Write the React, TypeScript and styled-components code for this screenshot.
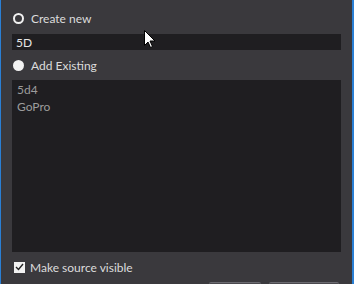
import React from "react";
import styled, { createGlobalStyle } from "styled-components";

const GlobalStyle = createGlobalStyle`
	html, body {
		margin: 0;
		padding: 0;
		background: #3a393d;
	}
	body {
		font-family: "Lato", "Open Sans", sans-serif;
		font-size: 12px;
	}
`;

const Dialog = styled.div`
	position: relative;
	width: 354px;
	height: 284px;
	box-sizing: border-box;
	background: #3a393d;
	border-left: 1px solid #2a7fd4;
	border-right: 2px solid #2a7fd4;
	padding: 8px 11px 0 11px;
	display: flex;
	flex-direction: column;
	overflow: hidden;
	color: #dcdcdc;

	& > * {
		flex-shrink: 0;
	}
`;

const OptionRow = styled.label`
	display: flex;
	align-items: center;
	gap: 7px;
	height: 20px;
	padding-left: 1px;
`;

const Radio = styled.span<{ checked?: boolean }>`
	width: 11px;
	height: 11px;
	border-radius: 50%;
	box-sizing: border-box;
	background: ${(p) => (p.checked ? "#3a393d" : "#f2f2f2")};
	border: ${(p) => (p.checked ? "2.5px solid #f2f2f2" : "none")};
	flex-shrink: 0;
`;

const Input = styled.div`
	height: 16px;
	margin: 6px 0 5px 0;
	background: #1f1e21;
	padding-left: 4px;
	display: flex;
	align-items: center;
	color: #e6e6e6;
`;

const ListBox = styled.div`
	box-sizing: border-box;
	height: 172px;
	margin-top: 5px;
	background: #1f1e21;
	padding: 1px 5px;
	display: flex;
	flex-direction: column;
`;

const ListItem = styled.div`
	height: 17px;
	line-height: 17px;
	color: #9c9c9c;
`;

const CheckRow = styled.label`
	display: flex;
	align-items: center;
	gap: 5px;
	margin-top: 7px;
	padding-left: 2px;
	height: 16px;
`;

const CheckBox = styled.span`
	width: 11px;
	height: 11px;
	background: #f2f2f2;
	display: flex;
	align-items: center;
	justify-content: center;
`;

const ButtonRow = styled.div`
	display: flex;
	justify-content: flex-end;
	gap: 8px;
	margin-top: 7px;
	padding-right: 2px;
`;

const Button = styled.div<{ w: number }>`
	width: ${(p) => p.w}px;
	height: 22px;
	background: #4a494e;
	border-top: 1px solid #6b6a70;
	border-radius: 2px;
`;

const Cursor = styled.svg`
	position: absolute;
	left: 143px;
	top: 30px;
`;

export default function App() {
	return (
		<>
			<GlobalStyle />
			<Dialog>
				<OptionRow>
					<Radio checked />
					Create new
				</OptionRow>
				<Input>5D</Input>
				<OptionRow>
					<Radio />
					Add Existing
				</OptionRow>
				<ListBox>
					<ListItem>5d4</ListItem>
					<ListItem>GoPro</ListItem>
				</ListBox>
				<CheckRow>
					<CheckBox>
						<svg width="9" height="8" viewBox="0 0 9 8">
							<path d="M1 4 L3.5 6.5 L8 1" fill="none" stroke="#222" strokeWidth="1.4" />
						</svg>
					</CheckBox>
					Make source visible
				</CheckRow>
				<ButtonRow>
					<Button w={52} />
					<Button w={70} />
				</ButtonRow>
				<Cursor width="12" height="19" viewBox="0 0 12 19">
					<path d="M0.5 0.5 L0.5 15.5 L4 12 L6.5 17.5 L8.5 16.5 L6 11 L11 11 Z" fill="#fff" stroke="#000" strokeWidth="1" />
				</Cursor>
			</Dialog>
		</>
	);
}
